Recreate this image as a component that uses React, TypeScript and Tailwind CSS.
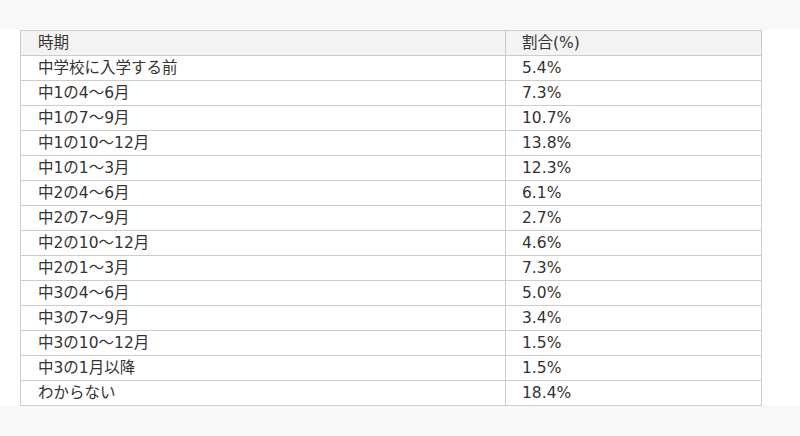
const rows: [string, string][] = [
  ["中学校に入学する前", "5.4%"],
  ["中1の4～6月", "7.3%"],
  ["中1の7～9月", "10.7%"],
  ["中1の10～12月", "13.8%"],
  ["中1の1～3月", "12.3%"],
  ["中2の4～6月", "6.1%"],
  ["中2の7～9月", "2.7%"],
  ["中2の10～12月", "4.6%"],
  ["中2の1～3月", "7.3%"],
  ["中3の4～6月", "5.0%"],
  ["中3の7～9月", "3.4%"],
  ["中3の10～12月", "1.5%"],
  ["中3の1月以降", "1.5%"],
  ["わからない", "18.4%"],
];

export default function App() {
  return (
    <div
      className="min-h-[436px] bg-[#f8f8f8] pt-[30px] text-[#333333]"
      style={{ fontFamily: '"DejaVu Sans", "Noto Sans CJK JP", sans-serif' }}
    >
      <div className="bg-white pl-[20px] pr-[38px]">
        <table className="w-[742px] table-fixed border-collapse text-[15.5px] leading-[24px]">
          <thead>
            <tr className="bg-[#f3f3f3]">
              <th className="w-[485px] border border-[#cccccc] px-[17px] text-left font-normal">時期</th>
              <th className="border border-[#cccccc] px-[16px] text-left font-normal">割合(%)</th>
            </tr>
          </thead>
          <tbody>
            {rows.map(([period, rate]) => (
              <tr key={period}>
                <td className="border border-[#cccccc] px-[17px]">{period}</td>
                <td className="border border-[#cccccc] px-[16px]">{rate}</td>
              </tr>
            ))}
          </tbody>
        </table>
      </div>
    </div>
  );
}
